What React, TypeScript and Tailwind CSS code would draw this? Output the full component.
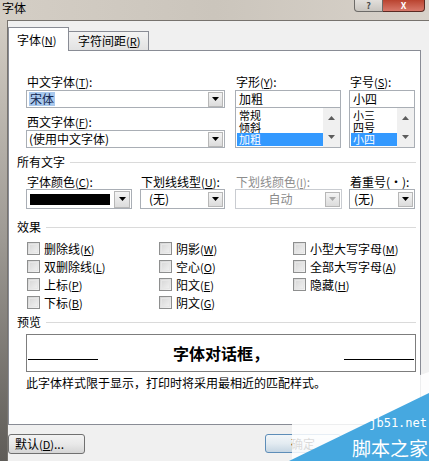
const FONT = "font-['Noto_Sans_CJK_SC','Liberation_Sans',sans-serif]";

function DropArrow({ disabled = false, size = 15 }: { disabled?: boolean; size?: number }) {
  return (
    <div
      className={
        size === 15
          ? "flex h-[15px] w-[15px] items-center justify-center border border-[#b7b7b7] bg-gradient-to-b from-[#f4f4f4] to-[#dcdcdc]"
          : "flex h-[17px] w-[16px] items-center justify-center border border-[#b7b7b7] bg-gradient-to-b from-[#f4f4f4] to-[#dcdcdc]"
      }
    >
      <svg width="7" height="4" viewBox="0 0 7 4">
        <polygon points="0,0 7,0 3.5,4" fill={disabled ? "#a8a8a8" : "#000"} />
      </svg>
    </div>
  );
}

function Combo({
  text,
  className,
  center = false,
  disabled = false,
  selected = false,
}: {
  text: string;
  className: string;
  center?: boolean;
  disabled?: boolean;
  selected?: boolean;
}) {
  return (
    <div className={`flex items-center border border-[#a9aeb5] bg-white pr-px ${className}`}>
      <div className={`flex flex-1 items-center ${center ? "justify-center" : "pl-[2px]"}`}>
        <span
          className={
            selected
              ? "bg-[#a9c9ee] px-px leading-[14px] text-[#14264e]"
              : disabled
                ? "leading-[14px] text-[#8a8a8a]"
                : "leading-[14px]"
          }
        >
          {text}
        </span>
      </div>
      <DropArrow disabled={disabled} />
    </div>
  );
}

function Label({ children, disabled = false }: { children: React.ReactNode; disabled?: boolean }) {
  return (
    <div className={`h-[12px] pl-px leading-[12px] ${disabled ? "text-[#8d8d8d]" : ""}`}>{children}</div>
  );
}

function Key({ k }: { k: string }) {
  return (
    <span className="text-[11px]">
      (<span className="underline">{k}</span>)
    </span>
  );
}

function ScrollBar() {
  return (
    <div className="flex w-[17px] flex-col items-center justify-between bg-[#f0f0f0] py-[8px]">
      <svg width="7" height="4" viewBox="0 0 7 4">
        <polygon points="0,4 7,4 3.5,0" fill="#5c5c5c" />
      </svg>
      <svg width="7" height="4" viewBox="0 0 7 4">
        <polygon points="0,0 7,0 3.5,4" fill="#5c5c5c" />
      </svg>
    </div>
  );
}

function PickList({ value, items, width }: { value: string; items: string[]; width: string }) {
  return (
    <div className={`flex flex-col ${width}`}>
      <div className="mt-[2px] flex h-[18px] items-center border border-[#a9aeb5] bg-white pl-[3px] leading-[14px]">
        {value}
      </div>
      <div className="-mt-px flex h-[41px] border border-[#a9aeb5] bg-white">
        <div className="flex flex-1 flex-col pl-px pt-px text-[11px]">
          {items.map((it, i) =>
            i === items.length - 1 ? (
              <div key={it} className="h-[13px] bg-[#3399ff] pl-[2px] leading-[13px] text-white">
                {it}
              </div>
            ) : (
              <div key={it} className="h-[12px] pl-[2px] leading-[12px]">
                {it}
              </div>
            ),
          )}
        </div>
        <ScrollBar />
      </div>
    </div>
  );
}

function GroupHeader({ title }: { title: string }) {
  return (
    <div className="ml-[8px] mr-[4px] flex h-[12px] items-center">
      <span className="leading-[12px]">{title}</span>
      <div className="ml-[5px] h-px flex-1 bg-[#dadada]" />
    </div>
  );
}

function Check({ label, k, w }: { label: string; k: string; w: string }) {
  return (
    <div className={`flex items-start ${w}`}>
      <div className="h-[13px] w-[13px] border border-[#8e8f8f] bg-gradient-to-br from-[#d4d4d4] to-[#f4f4f4] p-px">
        <div className="h-full w-full border border-[#e6e6e6]" />
      </div>
      <span className="ml-[4px] leading-[13px]">
        {label}
        <Key k={k} />
      </span>
    </div>
  );
}

export default function App() {
  const effects = [
    [
      ["删除线", "K"],
      ["阴影", "W"],
      ["小型大写字母", "M"],
    ],
    [
      ["双删除线", "L"],
      ["空心", "O"],
      ["全部大写字母", "A"],
    ],
    [
      ["上标", "P"],
      ["阳文", "E"],
      ["隐藏", "H"],
    ],
    [
      ["下标", "B"],
      ["阴文", "G"],
    ],
  ];

  return (
    <div
      className={`relative h-[461px] w-[429px] overflow-hidden bg-gradient-to-r from-[#d4cec5] via-[#cbc5bc] to-[#d8d2ca] text-[12px] text-black ${FONT}`}
    >
      {/* title bar */}
      <div className="flex h-[20px] items-start">
        <span className="ml-[2px] mt-[1px] text-[12px] leading-[13px]">字体</span>
        <div className="ml-auto mr-[4px] flex">
          <div className="flex h-[12px] w-[29px] items-center justify-center rounded-bl-[4px] border border-t-0 border-[#6d6b68] bg-gradient-to-b from-[#e2dfdb] to-[#c9c5bf]">
            <span className="text-[9px] font-bold leading-[9px] text-[#4a4a4a]">?</span>
          </div>
          <div className="flex h-[12px] w-[42px] items-center justify-center rounded-br-[4px] border border-l-0 border-t-0 border-[#5b2a22] bg-gradient-to-b from-[#b9432f] to-[#d8786a]">
            <span className="text-[9px] font-bold leading-[9px] text-white">X</span>
          </div>
        </div>
      </div>

      <div className="flex h-[441px]">
        <div className="w-[7px] bg-gradient-to-b from-[#d3cdc4] via-[#9d9993] to-[#5f5c58]" />
        <div className="flex-1 border-l border-t border-[#77736e] bg-[#f0f0f0] pt-[6px]">
          {/* tabs */}
          <div className="flex h-[23px]">
            <div className="relative z-10 flex h-[24px] w-[61px] items-center border border-b-0 border-[#898c95] bg-white pl-[8px] leading-[12px]">
              字体<Key k="N" />
            </div>
            <div className="mt-[4px] flex h-[19px] w-[80px] items-center border border-b-0 border-l-0 border-[#898c95] bg-gradient-to-b from-[#f3f3f3] to-[#e2e2e2] pl-[9px] leading-[12px]">
              字符间距<Key k="R" />
            </div>
          </div>

          {/* panel */}
          <div className="flex h-[375px] w-[413px] flex-col border border-[#898c95] bg-white">
            <div className="ml-[17px] mt-[25px] flex">
              <div className="flex w-[199px] flex-col">
                <Label>
                  中文字体<Key k="T" />:
                </Label>
                <Combo text="宋体" selected className="mt-[2px] h-[18px]" />
                <div className="mt-[8px]">
                  <Label>
                    西文字体<Key k="F" />:
                  </Label>
                </div>
                <Combo text="(使用中文字体)" className="mt-[2px] h-[18px]" />
              </div>
              <div className="ml-[10px] flex flex-col">
                <Label>
                  字形<Key k="Y" />:
                </Label>
                <PickList value="加粗" items={["常规", "倾斜", "加粗"]} width="w-[106px]" />
              </div>
              <div className="ml-[8px] flex flex-col">
                <Label>
                  字号<Key k="S" />:
                </Label>
                <PickList value="小四" items={["小三", "四号", "小四"]} width="w-[66px]" />
              </div>
            </div>

            <div className="mt-[8px]">
              <GroupHeader title="所有文字" />
            </div>

            <div className="ml-[17px] mt-[8px] flex">
              <div className="flex w-[106px] flex-col">
                <Label>
                  字体颜色<Key k="C" />:
                </Label>
                <div className="mt-px flex h-[20px] items-center border border-[#a9aeb5] bg-white pl-[3px] pr-[1px]">
                  <div className="h-[11px] w-[80px] bg-black" />
                  <div className="ml-auto">
                    <DropArrow size={16} />
                  </div>
                </div>
              </div>
              <div className="ml-[8px] flex w-[85px] flex-col">
                <Label>
                  下划线线型<Key k="U" />:
                </Label>
                <Combo text="(无)" className="mt-px h-[20px] pl-[6px]" />
              </div>
              <div className="ml-[10px] flex w-[107px] flex-col">
                <Label disabled>
                  下划线颜色<Key k="I" />:
                </Label>
                <Combo text="自动" center disabled className="mt-px h-[20px] border-[#c9ccd1]" />
              </div>
              <div className="ml-[7px] flex w-[66px] flex-col">
                <Label>着重号(·):</Label>
                <Combo text="(无)" className="mt-px h-[20px] pl-[2px]" />
              </div>
            </div>

            <div className="mt-[12px]">
              <GroupHeader title="效果" />
            </div>

            <div className="ml-[18px] mt-[9px] flex flex-col">
              {effects.map((row, ri) => (
                <div key={ri} className="flex h-[18px]">
                  {row.map(([label, k], ci) => (
                    <Check key={label} label={label} k={k} w={ci === 0 ? "w-[132px]" : ci === 1 ? "w-[134px]" : "w-[120px]"} />
                  ))}
                </div>
              ))}
            </div>

            <div className="mt-[2px]">
              <GroupHeader title="预览" />
            </div>

            <div className="ml-[17px] mt-[6px] flex h-[38px] w-[390px] items-start border border-[#7d7d7d] bg-white">
              <div className="ml-px mt-[24px] h-px w-[70px] bg-black" />
              <div className="flex flex-1 justify-center pt-[10px]">
                <span className="text-[16px] font-bold leading-[16px]">字体对话框，</span>
              </div>
              <div className="mr-px mt-[24px] h-px w-[70px] bg-black" />
            </div>

            <div className="ml-[17px] mt-[5px] leading-[12px]">此字体样式限于显示，打印时将采用最相近的匹配样式。</div>
          </div>

          {/* bottom buttons */}
          <div className="mt-[9px] flex">
            <div className="flex h-[20px] w-[77px] items-center rounded-[3px] border border-[#707070] bg-gradient-to-b from-[#f3f3f3] via-[#e9e9e9] to-[#d5d5d5] pl-[6px] leading-[12px]">
              默认<Key k="D" />...
            </div>
            <div className="ml-[180px] flex h-[19px] w-[76px] items-center justify-center rounded-[3px] border border-[#5d8db8] bg-gradient-to-b from-[#f2f6f9] via-[#e3ebf1] to-[#c6d6e3] leading-[12px]">
              确定
            </div>
          </div>
        </div>
      </div>

      {/* watermark */}
      <svg className="absolute bottom-0 right-0" width="140" height="95" viewBox="0 0 140 95">
        <polygon points="3,95 3,52 140,6 140,28" fill="#ffffff" fillOpacity="0.85" />
        <polygon points="0,95 140,27 140,95" fill="#46a8e0" />
      </svg>
      <span className="absolute right-[2px] top-[417px] font-['DejaVu_Sans_Mono',monospace] text-[12px] leading-[13px] text-white">
        jb51.net
      </span>
      <span className="absolute right-[1px] top-[437px] text-[19px] leading-[21px] text-white">脚本之家</span>
    </div>
  );
}
